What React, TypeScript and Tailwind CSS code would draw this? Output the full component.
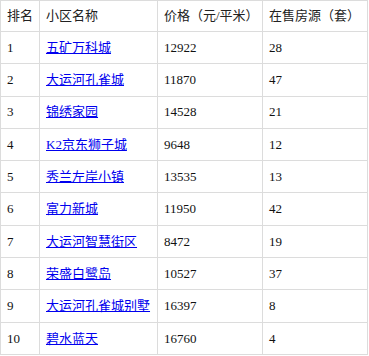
import React from "react";

const rows = [
  ["1", "五矿万科城", "12922", "28"],
  ["2", "大运河孔雀城", "11870", "47"],
  ["3", "锦绣家园", "14528", "21"],
  ["4", "K2京东狮子城", "9648", "12"],
  ["5", "秀兰左岸小镇", "13535", "13"],
  ["6", "富力新城", "11950", "42"],
  ["7", "大运河智慧街区", "8472", "19"],
  ["8", "荣盛白鹭岛", "10527", "37"],
  ["9", "大运河孔雀城别墅", "16397", "8"],
  ["10", "碧水蓝天", "16760", "4"],
];

const cell = "flex items-center pl-[6px] border-r border-b border-[#dcdcdc] whitespace-nowrap overflow-hidden";

export default function App() {
  return (
    <div
      className="w-[369px] h-[356px] bg-white text-[13px] text-[#111]"
      style={{ fontFamily: '"Liberation Serif", "Noto Sans CJK SC", serif' }}
    >
      <div className="grid grid-cols-[39px_118px_105px_105px] w-[368px] border-l border-t border-[#dcdcdc]">
        <div className={`${cell} h-[31px] text-[#222]`}>排名</div>
        <div className={`${cell} h-[31px] text-[#222]`}>小区名称</div>
        <div className={`${cell} h-[31px] text-[#222]`}>价格（元/平米）</div>
        <div className={`${cell} h-[31px] text-[#222]`}>在售房源（套）</div>
        {rows.map((r) => (
          <React.Fragment key={r[0]}>
            <div className={`${cell} h-[32.3px]`}>{r[0]}</div>
            <div className={`${cell} h-[32.3px]`}>
              <a href="#" className="text-[#0000ee] underline">{r[1]}</a>
            </div>
            <div className={`${cell} h-[32.3px]`}>{r[2]}</div>
            <div className={`${cell} h-[32.3px]`}>{r[3]}</div>
          </React.Fragment>
        ))}
      </div>
    </div>
  );
}
